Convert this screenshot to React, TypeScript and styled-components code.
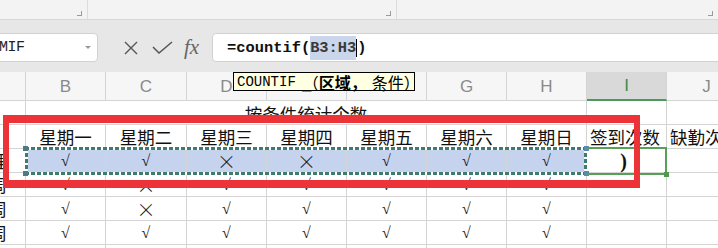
import styled, { createGlobalStyle } from 'styled-components';

const GlobalStyle = createGlobalStyle`
  html, body {
    margin: 0;
    padding: 0;
    background: #ffffff;
  }
  body {
    width: 718px;
    height: 248px;
    overflow: hidden;
    font-family: "Noto Sans CJK SC", "Liberation Sans", sans-serif;
  }
`;

const GRID = '#d4d4d4';
const CJK = '"Noto Sans CJK SC", "Noto Sans CJK TC", sans-serif';

const COLUMNS = [
  { key: 'A', width: 26, label: '' },
  { key: 'B', width: 80, label: 'B' },
  { key: 'C', width: 81, label: 'C' },
  { key: 'D', width: 80, label: 'D' },
  { key: 'E', width: 80, label: 'E' },
  { key: 'F', width: 80, label: 'F' },
  { key: 'G', width: 80, label: 'G' },
  { key: 'H', width: 80, label: 'H' },
  { key: 'I', width: 80, label: 'I' },
  { key: 'J', width: 80, label: 'J' },
];

const WEEK = ['星期一', '星期二', '星期三', '星期四', '星期五', '星期六', '星期日'];

const ROWS = [
  { side: '理', marks: ['√', '√', '×', '×', '√', '√', '√'], selected: true, tail: ')' },
  { side: '周', marks: ['√', '×', '√', '√', '√', '√', '√'] },
  { side: '周', marks: ['√', '×', '√', '√', '√', '√', '√'] },
  { side: '周', marks: ['√', '√', '√', '√', '√', '√', '√'] },
  { side: '周', marks: ['', '', '', '', '', '', ''] },
];

export default function App() {
  return (
    <Page>
      <GlobalStyle />

      <Ribbon>
        <RibbonGroup $width={88}>
          <Launcher />
        </RibbonGroup>
        <RibbonGroup $width={309}>
          <Launcher />
        </RibbonGroup>
        <RibbonGroup $width={321} $last>
          <Launcher />
        </RibbonGroup>
      </Ribbon>

      <FormulaBar>
        <NameBox>
          <NameText>MIF</NameText>
          <DropArrow />
        </NameBox>
        <FormulaTools>
          <svg width="14" height="14" viewBox="0 0 14 14">
            <path d="M1 1 L13 13 M13 1 L1 13" stroke="#555" strokeWidth="1.4" fill="none" />
          </svg>
          <svg width="21" height="13" viewBox="0 0 21 13">
            <path d="M1 6 L7 12 L20 1" stroke="#555" strokeWidth="1.5" fill="none" />
          </svg>
          <FxText>fx</FxText>
        </FormulaTools>
        <FormulaInput>
          <FormulaCode>
            =countif(<RangeRef>B3:H3</RangeRef>
            <Caret />)
          </FormulaCode>
        </FormulaInput>
      </FormulaBar>

      <Sheet>
        {COLUMNS.map((col) => (
          <ColHeader key={col.key} $active={col.key === 'I'}>
            {col.label}
          </ColHeader>
        ))}

        <SideCell />
        <TitleCell>按条件统计个数</TitleCell>
        <Cell />
        <Cell />

        <SideCell />
        {WEEK.map((day) => (
          <Cell key={day} $align="center">
            {day}
          </Cell>
        ))}
        <Cell $align="left">签到次数</Cell>
        <Cell $align="left">缺勤次数</Cell>

        {ROWS.map((row, r) => [
          <SideCell key={`s${r}`}>
            <SideText>{row.side}</SideText>
          </SideCell>,
          ...row.marks.map((mark, c) => (
            <Cell key={`c${r}-${c}`} $align="center" $fill={row.selected ? '#c5d3ef' : undefined}>
              <Mark $cross={mark === '×'}>{mark}</Mark>
            </Cell>
          )),
          <Cell key={`i${r}`} $align="center">
            {row.tail && <Paren>{row.tail}</Paren>}
          </Cell>,
          <Cell key={`j${r}`} />,
        ])}

        <Ants />
        <Handle $left={23} $top={74} $color="#4d7b84" />
        <Handle $left={23} $top={99} $color="#4d7b84" />
        <Handle $left={584} $top={74} $color="#5b8cae" />
        <Handle $left={584} $top={99} $color="#5b8cae" />
        <ActiveCell />
        <Handle $left={664} $top={100} $color="#4f9a4f" />

        <Tooltip>
          <TipMono>COUNTIF</TipMono>
          <TipParen>（</TipParen>
          <b>区域，</b>
          <TipRest>条件）</TipRest>
        </Tooltip>

        <RedFrame />
      </Sheet>
    </Page>
  );
}

const Page = styled.div`
  width: 718px;
  height: 248px;
  overflow: hidden;
  display: flex;
  flex-direction: column;
`;

const Ribbon = styled.div`
  height: 20px;
  flex: none;
  display: flex;
  background: #f3f3f3;
  border-bottom: 1px solid #d8d8d8;
  box-sizing: border-box;
`;

const RibbonGroup = styled.div<{ $width: number; $last?: boolean }>`
  width: ${({ $width }) => $width}px;
  flex: none;
  display: flex;
  justify-content: flex-end;
  align-items: flex-end;
  padding: 0 5px 3px 0;
  box-sizing: border-box;
  border-right: ${({ $last }) => ($last ? 'none' : '1px solid #dcdcdc')};
`;

const Launcher = styled.div`
  width: 4px;
  height: 4px;
  border-right: 1px solid #9a9a9a;
  border-bottom: 1px solid #9a9a9a;
`;

const FormulaBar = styled.div`
  height: 52px;
  flex: none;
  display: flex;
  align-items: flex-start;
  padding-top: 13px;
  box-sizing: border-box;
  background: #e7e7e7;
`;

const NameBox = styled.div`
  width: 102px;
  height: 29px;
  margin-left: -4px;
  box-sizing: border-box;
  display: flex;
  align-items: center;
  justify-content: space-between;
  padding: 0 6px 0 2px;
  background: #ffffff;
  border: 1px solid #d2d2d2;
  border-radius: 4px;
`;

const NameText = styled.span`
  font-family: "Liberation Mono", monospace;
  font-size: 15px;
  color: #222;
  letter-spacing: -0.5px;
`;

const DropArrow = styled.span`
  width: 0;
  height: 0;
  border-left: 3px solid transparent;
  border-right: 3px solid transparent;
  border-top: 3px solid #9a9a9a;
`;

const FormulaTools = styled.div`
  width: 114px;
  height: 29px;
  display: flex;
  align-items: center;
  gap: 15px;
  padding-left: 26px;
  box-sizing: border-box;
  & > svg:nth-child(2) {
    margin-left: -1px;
  }
`;

const FxText = styled.span`
  font-family: "Liberation Serif", serif;
  font-style: italic;
  font-size: 21px;
  color: #666;
  margin-left: -4px;
  line-height: 1;
`;

const FormulaInput = styled.div`
  flex: 1;
  height: 29px;
  margin-right: -4px;
  box-sizing: border-box;
  display: flex;
  align-items: center;
  padding-left: 14px;
  background: #ffffff;
  border: 1px solid #d2d2d2;
  border-radius: 4px;
`;

const FormulaCode = styled.span`
  font-family: "Liberation Mono", monospace;
  font-weight: bold;
  font-size: 15.4px;
  color: #111;
  display: flex;
  align-items: center;
  white-space: pre;
`;

const RangeRef = styled.span`
  background: #c9d6ec;
  color: #3a3a3a;
  padding: 3px 0;
`;

const Caret = styled.span`
  width: 1px;
  height: 18px;
  background: #000;
`;

const Sheet = styled.div`
  position: relative;
  display: grid;
  grid-template-columns: ${COLUMNS.map((c) => `${c.width}px`).join(' ')};
  grid-template-rows: 29px repeat(7, 24px);
  width: 718px;
  overflow: hidden;
  font-family: ${CJK};
`;

const ColHeader = styled.div<{ $active?: boolean }>`
  box-sizing: border-box;
  display: flex;
  align-items: center;
  justify-content: center;
  padding-top: 1px;
  background: ${({ $active }) => ($active ? '#d9d9d9' : '#f6f6f6')};
  border-right: 1px solid ${GRID};
  border-bottom: ${({ $active }) => ($active ? '2px solid #4b9a5c' : `1px solid ${GRID}`)};
  font-family: "Liberation Sans", sans-serif;
  font-size: 17px;
  color: ${({ $active }) => ($active ? '#3a8a4c' : '#8a8a8a')};
`;

const Cell = styled.div<{ $align?: 'left' | 'center'; $fill?: string }>`
  box-sizing: border-box;
  display: flex;
  align-items: center;
  justify-content: ${({ $align }) => ($align === 'center' ? 'center' : 'flex-start')};
  padding: 0 3px;
  background: ${({ $fill }) => $fill ?? '#ffffff'};
  border-right: 1px solid ${GRID};
  border-bottom: 1px solid ${GRID};
  font-size: 17.5px;
  color: #111;
  white-space: nowrap;
  overflow: visible;
  line-height: 1;
`;

const TitleCell = styled(Cell)`
  grid-column: span 7;
  justify-content: center;
  padding-top: 2px;
  font-size: 17.5px;
`;

const SideCell = styled(Cell)`
  overflow: hidden;
  justify-content: flex-end;
  padding: 0 18px 0 0;
`;

const SideText = styled.span`
  font-size: 17.5px;
`;

const Mark = styled.span<{ $cross?: boolean }>`
  font-family: ${({ $cross }) => ($cross ? CJK : '"Liberation Serif", serif')};
  font-size: ${({ $cross }) => ($cross ? '19px' : '16px')};
  font-weight: ${({ $cross }) => ($cross ? 300 : 400)};
  color: #1a1a1a;
`;

const Paren = styled.span`
  font-family: "Liberation Serif", serif;
  font-weight: bold;
  font-size: 20px;
  margin-right: 6px;
`;

const Ants = styled.div`
  position: absolute;
  left: 25px;
  top: 75px;
  width: 562px;
  height: 28px;
  box-sizing: border-box;
  background:
    repeating-linear-gradient(90deg, #3f7c6c 0 4px, #ffffff 4px 6px) top left / 100% 3px no-repeat,
    repeating-linear-gradient(90deg, #3f7c6c 0 4px, #ffffff 4px 6px) bottom left / 100% 3px no-repeat,
    repeating-linear-gradient(180deg, #3f7c6c 0 4px, #ffffff 4px 6px) top left / 3px 100% no-repeat,
    repeating-linear-gradient(180deg, #3f7c6c 0 4px, #ffffff 4px 6px) top right / 3px 100% no-repeat;
`;

const ActiveCell = styled.div`
  position: absolute;
  left: 587px;
  top: 75px;
  width: 80px;
  height: 28px;
  box-sizing: border-box;
  border: 2px solid #58a058;
  border-left: none;
`;

const Handle = styled.div<{ $left: number; $top: number; $color: string }>`
  position: absolute;
  left: ${({ $left }) => $left}px;
  top: ${({ $top }) => $top}px;
  width: 5px;
  height: 5px;
  background: ${({ $color }) => $color};
`;

const Tooltip = styled.div`
  position: absolute;
  left: 233px;
  top: 0;
  height: 19px;
  width: 182px;
  box-sizing: border-box;
  display: flex;
  align-items: center;
  padding-left: 3px;
  background: #ffffe1;
  border: 1px solid #000;
  font-family: ${CJK};
  font-size: 16px;
  color: #000;
  white-space: nowrap;
  line-height: 1;
  & b {
    font-weight: bold;
  }
`;

const TipMono = styled.span`
  font-family: "Liberation Mono", monospace;
  font-size: 14px;
`;

const TipParen = styled.span`
  margin-left: 7px;
`;

const TipRest = styled.span`
  margin-left: 5px;
`;

const RedFrame = styled.div`
  position: absolute;
  left: 3px;
  top: 43px;
  width: 637px;
  height: 73px;
  box-sizing: border-box;
  border-style: solid;
  border-color: #ec3338;
  border-width: 8px 6px;
`;
